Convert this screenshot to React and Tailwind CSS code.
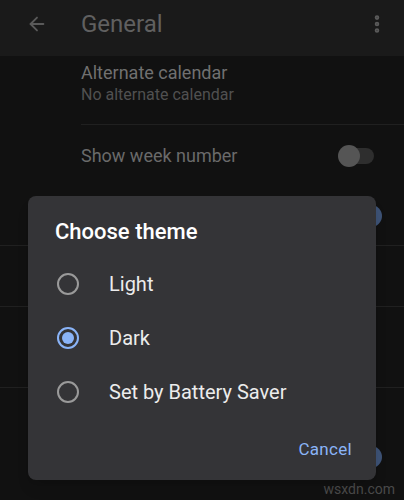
import { ArrowLeft, MoreVertical } from "lucide-react";

const options = [
  { label: "Light", checked: false },
  { label: "Dark", checked: true },
  { label: "Set by Battery Saver", checked: false },
];

function Radio({ checked }) {
  if (checked)
    return (
      <div className="w-[22px] h-[22px] rounded-full border-2 border-[#8ab4f8] flex items-center justify-center">
        <div className="w-[12px] h-[12px] rounded-full bg-[#8ab4f8]"></div>
      </div>
    );
  return <div className="w-[22px] h-[22px] rounded-full border-2 border-[#9a9a9a]"></div>;
}

export default function App() {
  return (
    <div
      className="relative w-[404px] h-[500px] overflow-hidden bg-[#111111]"
      style={{ fontFamily: "Roboto, 'Liberation Sans', sans-serif" }}
    >
      {/* Header */}
      <header className="h-[56px] bg-[#1a1a1a] flex items-start pt-[9px] pl-[26px] pr-[16px]">
        <ArrowLeft size={22} strokeWidth={2} className="text-[#5a5a5a] mt-[4px]" />
        <h1 className="ml-[33px] text-[24px] leading-[30px] text-[#606060] flex-1">General</h1>
        <MoreVertical size={22} strokeWidth={3} className="text-[#5a5a5a] mt-[4px]" />
      </header>

      {/* Settings list (dimmed behind dialog) */}
      <div className="pl-[81px]">
        <div className="h-[69px] pt-[6px] border-b border-[#202020]">
          <p className="text-[18px] leading-[22px] text-[#707070]">Alternate calendar</p>
          <p className="text-[16px] leading-[22px] text-[#505050]">No alternate calendar</p>
        </div>
      </div>
      <div className="h-[61px] flex items-center pl-[81px] pr-[30px]">
        <p className="text-[18px] text-[#6a6a6a] flex-1">Show week number</p>
        <div className="relative w-[34px] h-[16px] rounded-full bg-[#2e2e2e] flex items-center">
          <div className="absolute -left-[2px] w-[22px] h-[22px] rounded-full bg-[#555555]"></div>
        </div>
      </div>
      <div className="h-[60px] flex items-center justify-end pr-[22px] border-b border-[#202020]">
        <div className="w-[22px] h-[22px] rounded-full bg-[#3d5275]"></div>
      </div>
      <div className="h-[61px] border-b border-[#202020]"></div>
      <div className="h-[81px] border-b border-[#202020]"></div>
      <div className="h-[90px] flex items-end justify-end pr-[22px] pb-[10px]">
        <div className="w-[22px] h-[22px] rounded-full bg-[#3d5275]"></div>
      </div>

      <p className="absolute right-[9px] bottom-[0px] text-[14px] text-[#4a4a4a]">wsxdn.com</p>

      {/* Dialog */}
      <div className="absolute left-[28px] top-[196px] w-[348px] h-[284px] rounded-[8px] bg-[#343437] shadow-lg">
        <h2 className="pl-[27px] pt-[22px] text-[22px] font-medium text-white leading-[28px]">
          Choose theme
        </h2>
        <div className="mt-[11px]">
          {options.map((o) => (
            <div key={o.label} className="h-[54px] flex items-center pl-[29px]">
              <Radio checked={o.checked} />
              <span className="ml-[30px] text-[20px] text-[#ececec]">{o.label}</span>
            </div>
          ))}
        </div>
        <div className="flex justify-end pr-[24px] mt-[18px]">
          <button className="text-[17px] font-normal text-[#8ab4f8] tracking-[0.3px]">Cancel</button>
        </div>
      </div>
    </div>
  );
}
